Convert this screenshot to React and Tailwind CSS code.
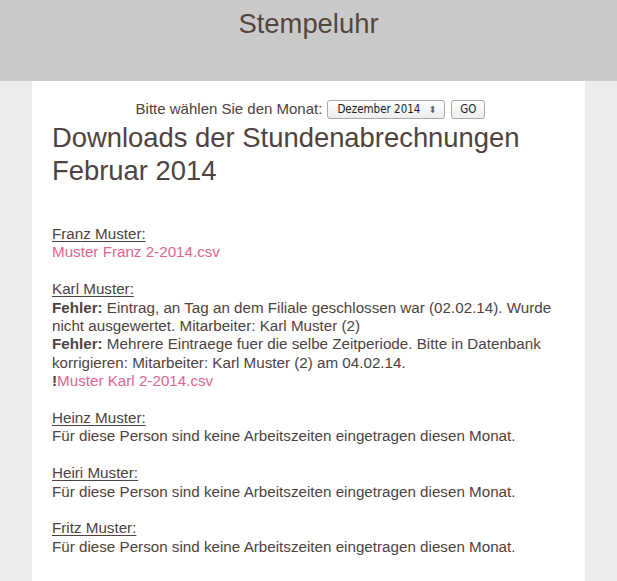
import React from "react";

function Person({ name, children }) {
  return (
    <div className="mb-[18.4px]">
      <div className="underline underline-offset-[2px]">{name}</div>
      {children}
    </div>
  );
}

const Empty = () => <div>Für diese Person sind keine Arbeitszeiten eingetragen diesen Monat.</div>;

export default function App() {
  return (
    <div className="min-h-[581px] bg-[#ececec] text-[#4e4340] font-['Liberation_Sans',Arial,sans-serif]">
      <header className="h-[81px] bg-[#cacaca] text-center">
        <div className="pt-[7px] text-[27.4px] leading-[34px] text-[#54463f]">Stempeluhr</div>
      </header>
      <main className="mx-[32px] min-h-[500px] bg-white px-[20px] pt-[19px] text-[15.2px] leading-[18.4px]">
        <div className="flex items-center justify-center gap-[5px] pl-[4px] text-[15px]">
          <span>Bitte wählen Sie den Monat:</span>
          <span className="flex h-[19px] w-[118px] items-center justify-between rounded-[3px] border border-[#a9a9a9] bg-gradient-to-b from-white to-[#ededed] pl-[9px] pr-[8px] font-['DejaVu_Sans_Condensed','DejaVu_Sans',sans-serif] text-[11.5px] text-[#222]">
            <span>Dezember 2014</span>
            <span className="text-[10px] leading-none text-[#666]">⬍</span>
          </span>
          <span className="ml-[1px] flex h-[19px] w-[34px] items-center justify-center rounded-[3px] border border-[#a9a9a9] bg-gradient-to-b from-white to-[#ededed] font-['DejaVu_Sans_Condensed','DejaVu_Sans',sans-serif] text-[11.5px] text-[#222]">
            GO
          </span>
        </div>
        <h1 className="mt-[2px] text-[27.4px] leading-[33px] text-[#4e4340]">
          Downloads der Stundenabrechnungen
          <br />
          Februar 2014
        </h1>
        <div className="mt-[38px]">
          <Person name="Franz Muster:">
            <div className="text-[#df6690]">Muster Franz 2-2014.csv</div>
          </Person>
          <Person name="Karl Muster:">
            <div>
              <b>Fehler:</b> Eintrag, an Tag an dem Filiale geschlossen war (02.02.14). Wurde nicht ausgewertet. Mitarbeiter: Karl Muster (2)
            </div>
            <div>
              <b>Fehler:</b> Mehrere Eintraege fuer die selbe Zeitperiode. Bitte in Datenbank korrigieren: Mitarbeiter: Karl Muster (2) am 04.02.14.
            </div>
            <div>
              <b>!</b>
              <span className="text-[#df6690]">Muster Karl 2-2014.csv</span>
            </div>
          </Person>
          <Person name="Heinz Muster:">
            <Empty />
          </Person>
          <Person name="Heiri Muster:">
            <Empty />
          </Person>
          <Person name="Fritz Muster:">
            <Empty />
          </Person>
        </div>
      </main>
    </div>
  );
}
